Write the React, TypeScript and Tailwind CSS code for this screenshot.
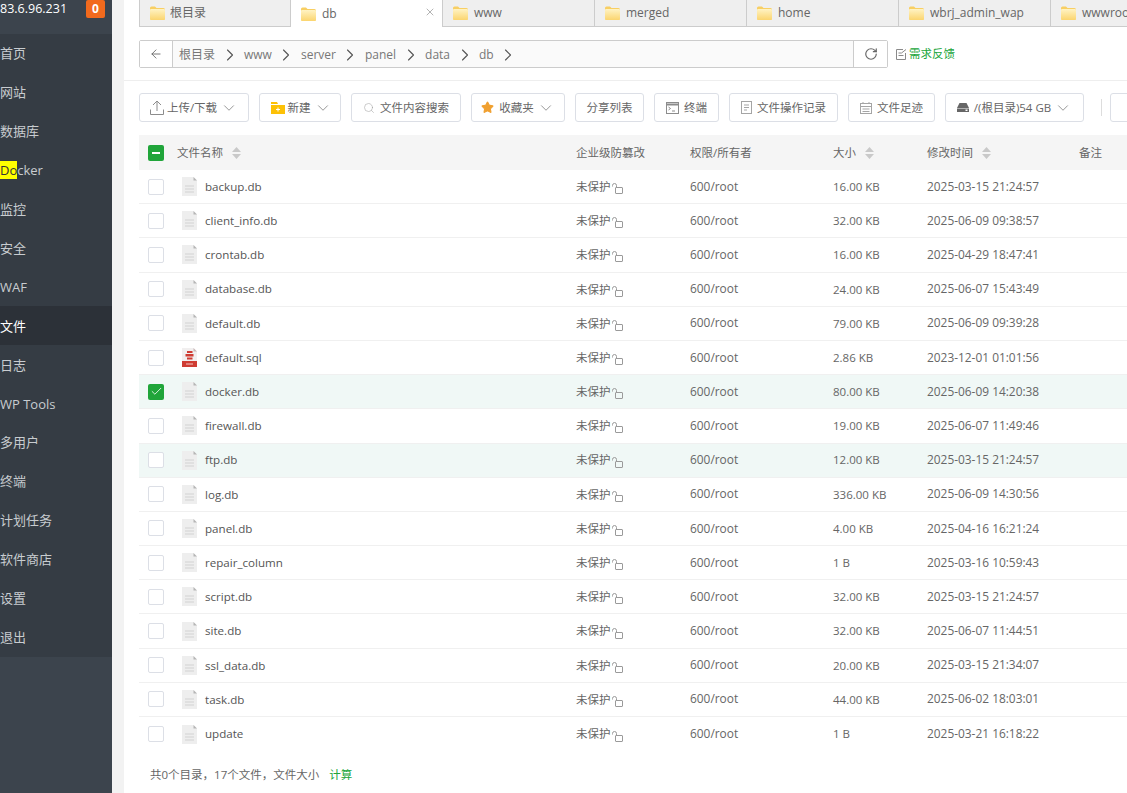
import React from 'react';
import { ArrowLeft, ChevronDown, ChevronRight, Check, RotateCw, Search, X, Star } from 'lucide-react';

const font = 'font-["Open_Sans","Noto_Sans_CJK_SC",sans-serif]';

const menu = ['首页', '网站', '数据库', 'Docker', '监控', '安全', 'WAF', '文件', '日志', 'WP Tools', '多用户', '终端', '计划任务', '软件商店', '设置', '退出'];
const tabs = ['根目录', 'db', 'www', 'merged', 'home', 'wbrj_admin_wap', 'wwwroot'];
const crumbs = ['根目录', 'www', 'server', 'panel', 'data', 'db'];

const files = [
  { name: 'backup.db', size: '16.00 KB', time: '2025-03-15 21:24:57' },
  { name: 'client_info.db', size: '32.00 KB', time: '2025-06-09 09:38:57' },
  { name: 'crontab.db', size: '16.00 KB', time: '2025-04-29 18:47:41' },
  { name: 'database.db', size: '24.00 KB', time: '2025-06-07 15:43:49' },
  { name: 'default.db', size: '79.00 KB', time: '2025-06-09 09:39:28' },
  { name: 'default.sql', size: '2.86 KB', time: '2023-12-01 01:01:56' },
  { name: 'docker.db', size: '80.00 KB', time: '2025-06-09 14:20:38' },
  { name: 'firewall.db', size: '19.00 KB', time: '2025-06-07 11:49:46' },
  { name: 'ftp.db', size: '12.00 KB', time: '2025-03-15 21:24:57' },
  { name: 'log.db', size: '336.00 KB', time: '2025-06-09 14:30:56' },
  { name: 'panel.db', size: '4.00 KB', time: '2025-04-16 16:21:24' },
  { name: 'repair_column', size: '1 B', time: '2025-03-16 10:59:43' },
  { name: 'script.db', size: '32.00 KB', time: '2025-03-15 21:24:57' },
  { name: 'site.db', size: '32.00 KB', time: '2025-06-07 11:44:51' },
  { name: 'ssl_data.db', size: '20.00 KB', time: '2025-03-15 21:34:07' },
  { name: 'task.db', size: '44.00 KB', time: '2025-06-02 18:03:01' },
  { name: 'update', size: '1 B', time: '2025-03-21 16:18:22' },
];

function FolderIcon() {
  return (
    <svg width="15" height="14" viewBox="0 0 15 14" className="shrink-0">
      <defs>
        <linearGradient id="fold" x1="0" y1="0" x2="0" y2="1">
          <stop offset="0" stopColor="#fff3c4" />
          <stop offset="1" stopColor="#fbd56f" />
        </linearGradient>
      </defs>
      <path d="M0 2q0-1.500 1.500-1.500h3.500l1.500 1.500h7q1.500 0 1.500 1.500v9q0 1-1 1h-12.500q-1.500 0-1.500-1z" fill="#f8cf63" />
      <rect x="0" y="3" width="15" height="11" rx="1" fill="url(#fold)" />
    </svg>
  );
}

function FileIcon() {
  return (
    <svg width="15" height="19" viewBox="0 0 15 19" className="shrink-0">
      <path d="M0 0h11.500l3.500 3.500v15.500h-15z" fill="#eeeeee" />
      <path d="M11.500 0l3.500 3.500h-3.500z" fill="#b5b5b5" />
      <path d="M3 9h9M3 12h9M3 15h9" stroke="#d2d2d2" strokeWidth="1" />
    </svg>
  );
}

function SqlIcon() {
  return (
    <svg width="15" height="19" viewBox="0 0 15 19" className="shrink-0">
      <path d="M0 0h11.500l3.500 3.500v15.500h-15z" fill="#f1efef" />
      <path d="M11.500 0l3.500 3.500h-3.500z" fill="#c9b7b7" />
      <rect x="0" y="13" width="15" height="6" fill="#cf3c33" />
      <path d="M5 3h5.500v2h-5.500zM3.500 6h8v2.500h-8zM5 9.500h5.500v2h-5.500z" fill="#cf3c33" />
      <path d="M4 16h7" stroke="#f3c8c5" strokeWidth="1" />
    </svg>
  );
}

function LockIcon() {
  return (
    <svg width="11" height="11" viewBox="0 0 11 11" fill="none" stroke="#9a9a9a" strokeWidth="1" className="shrink-0 mt-[4px] ml-[1.500px]">
      <rect x="3.500" y="4.500" width="7" height="6" rx="0.500" />
      <path d="M0.500 3.500v-1q0-2 2-2t2 2v2" />
    </svg>
  );
}

function SortIcon() {
  return (
    <svg width="9" height="12" viewBox="0 0 9 12" fill="#c9c9c9" className="shrink-0">
      <path d="M4.500 0l4.500 5h-9zM0 7h9l-4.500 5z" />
    </svg>
  );
}

function UploadIcon() {
  return (
    <svg width="14" height="15" viewBox="0 0 14 15" fill="none" stroke="#8c8c8c" strokeWidth="1" className="-mr-[2px]">
      <path d="M7 11v-10M3 5l4-4 4 4M0.500 9.500v5h13v-5" />
    </svg>
  );
}

function NewFolderIcon() {
  return (
    <svg width="14" height="12" viewBox="0 0 14 12" className="-mr-[2px]">
      <path d="M0 0h6l1 2h7v10h-14z" fill="#fdc106" />
      <path d="M0 2h14v1h-14z" fill="#fff" />
      <path d="M7 5.500v4M5 7.500h4" stroke="#fff" strokeWidth="1" />
    </svg>
  );
}

function TerminalIcon() {
  return (
    <svg width="13" height="12" viewBox="0 0 13 12" fill="none" stroke="#8c8c8c" strokeWidth="1">
      <rect x="0.500" y="0.500" width="12" height="11" />
      <path d="M0.500 2.500h12" strokeWidth="2" />
      <path d="M2.500 5l2 1.500-2 1.500M6 9h3" />
    </svg>
  );
}

function LogIcon() {
  return (
    <svg width="11" height="13" viewBox="0 0 11 13" fill="none" stroke="#a5a5a5" strokeWidth="1">
      <rect x="0.500" y="0.500" width="10" height="12" />
      <path d="M3 4h5M3 6.500h5M3 9h3" />
    </svg>
  );
}

function CalendarIcon() {
  return (
    <svg width="12" height="12" viewBox="0 0 12 12" fill="none" stroke="#a5a5a5" strokeWidth="1">
      <rect x="0.500" y="1.500" width="11" height="10" />
      <path d="M0.500 4.500h11M3 0v2M9 0v2M2.500 7h7M2.500 9.500h7" />
    </svg>
  );
}

function DiskIcon() {
  return (
    <svg width="12" height="9" viewBox="0 0 12 9" fill="#666666">
      <path d="M2.500 0h7l2.500 5h-12z" />
      <path d="M0 5.500h12v3.500h-12zM8.500 6.500v1.500h2v-1.500z" fillRule="evenodd" />
    </svg>
  );
}

function FeedbackIcon() {
  return (
    <svg width="11" height="11" viewBox="0 0 11 11" fill="none" stroke="#8a8a8a" strokeWidth="1" className="shrink-0">
      <path d="M7 0.500h-6.500v10h9v-6.500M2.500 4h3M2.500 6.500h5M5.500 4l4.500-3.500" />
    </svg>
  );
}

function ToolButton({ width, children, caret }: { width: string; children: React.ReactNode; caret?: boolean }) {
  return (
    <div className={`${width} h-[29px] shrink-0 flex items-center justify-center gap-[5px] border border-[#dcdfe6] rounded-[3px] bg-white text-[11.500px] text-[#666]`}>
      {children}
      {caret && <ChevronDown size={18} strokeWidth={0.900} className="text-[#666] -ml-[2px]" />}
    </div>
  );
}

function Checkbox({ checked }: { checked?: boolean }) {
  if (checked) {
    return (
      <div className="w-4 h-4 rounded-[2px] bg-[#20a53a] flex items-center justify-center">
        <Check size={13} strokeWidth={1.500} className="text-white" />
      </div>
    );
  }
  return <div className="w-4 h-4 rounded-[2px] border border-[#dcdfe6] bg-white" />;
}

function Sidebar() {
  return (
    <aside className="w-[112px] shrink-0 bg-[#3c444d] flex flex-col">
      <div className="h-[34px] shrink-0 flex items-start justify-between pr-[7px]">
        <span className="text-[12.500px] leading-[18px] text-white font-medium whitespace-nowrap">83.6.96.231</span>
        <span className="w-[19px] h-[18px] rounded-[2px] bg-[#f26a1d] text-white text-[12px] font-bold flex items-center justify-center">0</span>
      </div>
      <nav className="bg-[#353c44] flex flex-col">
        {menu.map((m) => (
          <div
            key={m}
            className={`h-[38.930px] pt-px flex items-center text-[13px] whitespace-nowrap ${m === '文件' ? 'bg-[#2c3138] text-white' : 'text-[#c8ccd0]'}`}
          >
            {m === 'Docker' ? (
              <span>
                <span className="bg-[#ffff00] text-[#333]">Do</span>cker
              </span>
            ) : (
              m
            )}
          </div>
        ))}
      </nav>
    </aside>
  );
}

function TabBar() {
  return (
    <div className="flex h-[27px] border-b border-[#ccc] -mr-[60px] ml-[15px]">
      {tabs.map((t, i) => {
        const active = t === 'db';
        return (
          <div
            key={t}
            className={`w-[152px] shrink-0 flex items-center pl-[10px] pr-[5px] text-[12px] border-r border-[#ccc] ${
              active ? 'bg-white h-[27px]' : 'bg-[#efefef]'
            } ${i === 0 ? 'border-l gap-[5px]' : 'gap-[6px]'}`}
          >
            <FolderIcon />
            <span className="flex-1 text-[#666]">{t}</span>
            {active && <X size={12} strokeWidth={1} className="text-[#666] mb-[3px] mr-[1px]" />}
          </div>
        );
      })}
    </div>
  );
}

function PathBar() {
  return (
    <div className="flex items-center mt-[13px] ml-[15px]">
      <div className="w-[749px] h-[28px] flex border border-[#ccc] rounded-[2px] bg-[#fafafa]">
        <div className="w-[33px] bg-white border-r border-[#ccc] flex items-center justify-center">
          <ArrowLeft size={14} strokeWidth={1.500} className="text-[#666]" />
        </div>
        <div className="flex-1 flex items-center pl-[6px] pt-[2px] text-[12px] text-[#777]">
          {crumbs.map((c) => (
            <div key={c} className="flex items-center">
              <span>{c}</span>
              <ChevronRight size={20} strokeWidth={1.300} className="text-[#555] mx-[4.500px]" />
            </div>
          ))}
        </div>
        <div className="w-[34px] bg-white border-l border-[#ccc] flex items-center justify-center">
          <RotateCw size={14} strokeWidth={2} className="text-[#666]" />
        </div>
      </div>
      <div className="flex items-center gap-[2px] ml-2 text-[11.500px] text-[#20a53a]">
        <FeedbackIcon />
        需求反馈
      </div>
    </div>
  );
}

function Toolbar() {
  return (
    <div className="flex items-start gap-[10px] mt-[12px] pt-[12px] pl-[15px] border-t border-[#eeeeee] -mr-[60px]">
      <ToolButton width="w-[110px]" caret><UploadIcon />上传/下载</ToolButton>
      <ToolButton width="w-[82px] pl-[2px]" caret><NewFolderIcon />新建</ToolButton>
      <ToolButton width="w-[110px]"><Search size={12} strokeWidth={1} className="text-[#999]" />文件内容搜索</ToolButton>
      <ToolButton width="w-[94px]" caret><Star size={13} className="text-[#f0a030] fill-[#f0a030]" />收藏夹</ToolButton>
      <ToolButton width="w-[69px]">分享列表</ToolButton>
      <ToolButton width="w-[65px]"><TerminalIcon />终端</ToolButton>
      <ToolButton width="w-[109px]"><LogIcon />文件操作记录</ToolButton>
      <ToolButton width="w-[87px]"><CalendarIcon />文件足迹</ToolButton>
      <ToolButton width="w-[139px]" caret><DiskIcon /><span>/(根目录)54 GB</span></ToolButton>
      <div className="w-px h-[17px] mt-[6px] bg-[#dddddd] ml-[7px]" />
      <div className="w-[40px] h-[29px] shrink-0 border border-[#dcdfe6] rounded-[3px] ml-[-2px]" />
    </div>
  );
}

const cols = 'grid grid-cols-[29px_399px_114px_143px_94px_152px_1fr] items-center';

function FileTable() {
  return (
    <div className="ml-[15px] -mr-[60px] mt-[13px] text-[11.900px]">
      <div className={`${cols} h-[35px] bg-[#f5f5f5] text-[#666] text-[11.500px] pl-[9px]`}>
        <div className="w-4 h-4 rounded-[2px] bg-[#20a53a] flex items-center justify-center">
          <div className="w-[8px] h-[2px] bg-white" />
        </div>
        <div className="flex items-center gap-[9px]">文件名称<SortIcon /></div>
        <div>企业级防篡改</div>
        <div>权限/所有者</div>
        <div className="flex items-center gap-[9px]">大小<SortIcon /></div>
        <div className="flex items-center gap-[9px]">修改时间<SortIcon /></div>
        <div>备注</div>
      </div>
      {files.map((f, i) => {
        const highlighted = f.name === 'docker.db' || f.name === 'ftp.db';
        return (
          <div
            key={f.name}
            className={`${cols} h-[34.200px] pl-[9px] text-[#666] ${i < files.length - 1 ? 'border-b border-[#f0f0f0]' : ''} ${highlighted ? 'bg-[#f0f8f6]' : ''}`}
          >
            <Checkbox checked={f.name === 'docker.db'} />
            <div className="flex items-center gap-[8px] pl-[5px] text-[#555] text-[11.600px]">
              {f.name === 'default.sql' ? <SqlIcon /> : <FileIcon />}
              <span>{f.name}</span>
            </div>
            <div className="flex items-center text-[11.500px]">未保护<LockIcon /></div>
            <div>600/root</div>
            <div className="text-[11.500px]">{f.size}</div>
            <div>{f.time}</div>
            <div />
          </div>
        );
      })}
      <div className="mt-[15px] pl-[11px] text-[#666] text-[11.500px] flex gap-[10px]">
        <span>共0个目录，17个文件，文件大小</span>
        <span className="text-[#20a53a]">计算</span>
      </div>
    </div>
  );
}

export default function App() {
  return (
    <div className={`${font} flex w-[1127px] h-[793px] overflow-hidden bg-[#f2f2f2]`}>
      <Sidebar />
      <main className="flex-1 min-w-0 ml-[12px] bg-white overflow-hidden">
        <TabBar />
        <PathBar />
        <Toolbar />
        <FileTable />
      </main>
    </div>
  );
}
